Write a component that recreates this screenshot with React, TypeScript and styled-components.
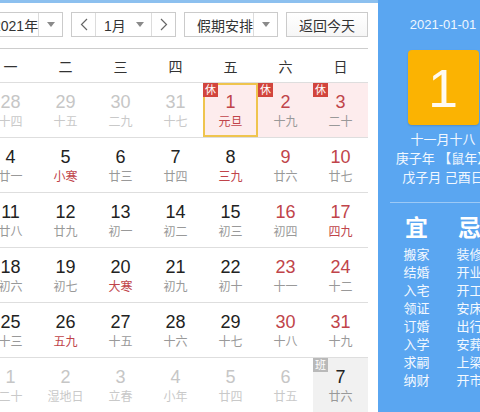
import React from 'react';
import styled, { createGlobalStyle } from 'styled-components';

const GlobalStyle = createGlobalStyle`
  html, body {
    margin: 0;
    padding: 0;
  }
  body {
    width: 480px;
    height: 412px;
    overflow: hidden;
    background: #fff;
    font-family: 'Liberation Sans', 'Noto Sans CJK SC', sans-serif;
  }
`;

const RED = '#c0444a';

const Widget = styled.div`
  display: flex;
  width: 480px;
  height: 412px;
  overflow: hidden;
`;

const CalendarPane = styled.div`
  flex: none;
  width: 385px;
  margin-left: -17px;
  padding-right: 10px;
  border-top: 3px solid #8cc0ef;
  background: #fff;
`;

const Toolbar = styled.div`
  display: flex;
  gap: 8px;
  height: 25px;
  padding: 9px 0 11px;
  border-bottom: 1px solid #cdcdcd;
`;

const SelectBox = styled.div<{ $width: number }>`
  display: flex;
  flex: none;
  width: ${(p) => p.$width}px;
  height: 25px;
  box-sizing: border-box;
  border: 1px solid #cbcbcb;
  background: #fff;
  font-size: 14px;
  color: #333;
`;

const SelectLabel = styled.span<{ $pad: number }>`
  flex: 1;
  display: flex;
  align-items: center;
  padding-left: ${(p) => p.$pad}px;
  white-space: nowrap;
`;

const Caret = styled.span<{ $divider?: boolean }>`
  flex: none;
  width: 23px;
  display: flex;
  align-items: center;
  justify-content: center;
  border-left: ${(p) => (p.$divider ? '1px solid #dcdcdc' : 'none')};
  &::after {
    content: '';
    border-left: 4px solid transparent;
    border-right: 4px solid transparent;
    border-top: 5px solid #8a8a8a;
  }
`;

const Arrow = styled.span<{ $side: 'left' | 'right' }>`
  flex: none;
  width: 23px;
  display: flex;
  align-items: center;
  justify-content: center;
  border-${(p) => (p.$side === 'left' ? 'right' : 'left')}: 1px solid #dcdcdc;
`;

const TodayButton = styled.div`
  flex: none;
  width: 82px;
  height: 25px;
  box-sizing: border-box;
  border: 1px solid #cbcbcb;
  background: linear-gradient(#fff, #f6f6f6);
  display: flex;
  align-items: center;
  justify-content: center;
  font-size: 14px;
  color: #333;
`;

const WeekHeader = styled.div`
  display: grid;
  grid-template-columns: repeat(7, 55px);
  height: 33px;
  border-bottom: 1px solid #dedede;
`;

const WeekDay = styled.div`
  display: flex;
  align-items: center;
  justify-content: center;
  font-size: 14px;
  color: #333;
`;

const Row = styled.div`
  display: grid;
  grid-template-columns: repeat(7, 55px);
  height: 54px;
  border-bottom: 1px solid #dedede;
`;

const Cell = styled.div<{ $bg: string; $today?: boolean }>`
  position: relative;
  display: flex;
  flex-direction: column;
  align-items: center;
  padding-top: 8px;
  box-sizing: border-box;
  background: ${(p) => p.$bg};
  box-shadow: ${(p) => (p.$today ? 'inset 0 0 0 2px #efc44e' : 'none')};
`;

const DayNum = styled.span<{ $color: string }>`
  font-size: 18px;
  line-height: 22px;
  color: ${(p) => p.$color};
`;

const Lunar = styled.span<{ $color: string }>`
  font-size: 12px;
  line-height: 18px;
  color: ${(p) => p.$color};
  white-space: nowrap;
`;

const Badge = styled.span<{ $bg: string }>`
  position: absolute;
  top: 0;
  left: 0;
  width: 15px;
  height: 14px;
  background: ${(p) => p.$bg};
  color: #fff;
  font-size: 11px;
  line-height: 14px;
  text-align: center;
`;

const SidePane = styled.div`
  flex: none;
  width: 130px;
  padding-top: 16px;
  background: #5aa6f1;
  color: #fff;
  display: flex;
  flex-direction: column;
  align-items: center;
`;

const DateLine = styled.div`
  font-size: 13px;
  line-height: 18px;
  color: #eef6ff;
`;

const BigDay = styled.div`
  width: 71px;
  height: 75px;
  margin-top: 16px;
  border-radius: 4px;
  background: #fbb302;
  box-shadow: 0 1px 2px rgba(0, 0, 0, 0.15);
  display: flex;
  align-items: center;
  justify-content: center;
  font-size: 54px;
  color: #fffaf0;
`;

const LunarInfo = styled.div<{ $first?: boolean }>`
  margin-top: ${(p) => (p.$first ? 5 : 0)}px;
  font-size: 13px;
  line-height: 19px;
  color: #f2f8ff;
  white-space: nowrap;
`;

const Divider = styled.div`
  align-self: stretch;
  height: 1px;
  margin: 15px 12px 0;
  background: rgba(255, 255, 255, 0.4);
`;

const YiJi = styled.div`
  align-self: stretch;
  display: grid;
  grid-template-columns: 53px 53px;
  padding-left: 12px;
  margin-top: 12px;
`;

const YiJiCol = styled.div`
  display: flex;
  flex-direction: column;
  align-items: center;
`;

const YiJiTitle = styled.div`
  font-size: 23px;
  font-weight: bold;
  line-height: 26px;
  margin-bottom: 5px;
`;

const YiJiItem = styled.div`
  font-size: 13px;
  line-height: 18px;
  color: #f4f9ff;
  white-space: nowrap;
`;

const Chevron = ({ dir }: { dir: 'left' | 'right' }) => (
  <svg width="8" height="13" viewBox="0 0 8 13">
    <polyline
      points={dir === 'left' ? '7,1 1.5,6.5 7,12' : '1,1 6.5,6.5 1,12'}
      fill="none"
      stroke="#666"
      strokeWidth="1.2"
    />
  </svg>
);

// flags: o = other month, f = red lunar text, h = holiday (休), w = work day (班), t = today
type DayCell = [number, string, string?];

const weeks: DayCell[][] = [
  [[28, '十四', 'o'], [29, '十五', 'o'], [30, '二九', 'o'], [31, '十七', 'o'], [1, '元旦', 'hft'], [2, '十九', 'h'], [3, '二十', 'h']],
  [[4, '廿一'], [5, '小寒', 'f'], [6, '廿三'], [7, '廿四'], [8, '三九', 'f'], [9, '廿六'], [10, '廿七']],
  [[11, '廿八'], [12, '廿九'], [13, '初一'], [14, '初二'], [15, '初三'], [16, '初四'], [17, '四九', 'f']],
  [[18, '初六'], [19, '初七'], [20, '大寒', 'f'], [21, '初九'], [22, '初十'], [23, '十一'], [24, '十二']],
  [[25, '十三'], [26, '五九', 'f'], [27, '十五'], [28, '十六'], [29, '十七'], [30, '十八'], [31, '十九']],
  [[1, '二十', 'o'], [2, '湿地日', 'o'], [3, '立春', 'o'], [4, '小年', 'o'], [5, '廿四', 'o'], [6, '廿五', 'o'], [7, '廿六', 'w']],
];

const weekNames = ['一', '二', '三', '四', '五', '六', '日'];
const yi = ['搬家', '结婚', '入宅', '领证', '订婚', '入学', '求嗣', '纳财'];
const ji = ['装修', '开业', '开工', '安床', '出行', '安葬', '上梁', '开市'];

const renderCell = ([day, lunar, flags = ''], col: number) => {
  const other = flags.includes('o');
  const holiday = flags.includes('h');
  const work = flags.includes('w');
  const weekend = col >= 5;
  let numColor = '#222';
  if (other) numColor = '#c6c6c6';
  else if (holiday || (weekend && !work)) numColor = RED;
  let lunarColor = '#999';
  if (other) numColor === '#c6c6c6' && (lunarColor = '#c9c9c9');
  if (!other && flags.includes('f')) lunarColor = RED;
  const bg = holiday ? '#fdeced' : work ? '#f1f1f1' : 'transparent';
  return (
    <Cell key={col} $bg={bg} $today={flags.includes('t')}>
      {holiday && <Badge $bg="#d2453d">休</Badge>}
      {work && <Badge $bg="#b9b9b9">班</Badge>}
      <DayNum $color={numColor}>{day}</DayNum>
      <Lunar $color={lunarColor}>{lunar}</Lunar>
    </Cell>
  );
};

export default function App() {
  return (
    <>
      <GlobalStyle />
      <Widget>
        <CalendarPane>
          <Toolbar>
            <SelectBox $width={80}>
              <SelectLabel $pad={9}>2021年</SelectLabel>
              <Caret $divider />
            </SelectBox>
            <SelectBox $width={105}>
              <Arrow $side="left">
                <Chevron dir="left" />
              </Arrow>
              <SelectLabel $pad={8}>1月</SelectLabel>
              <Caret />
              <Arrow $side="right">
                <Chevron dir="right" />
              </Arrow>
            </SelectBox>
            <SelectBox $width={94}>
              <SelectLabel $pad={12}>假期安排</SelectLabel>
              <Caret $divider />
            </SelectBox>
            <TodayButton>返回今天</TodayButton>
          </Toolbar>
          <WeekHeader>
            {weekNames.map((w) => (
              <WeekDay key={w}>{w}</WeekDay>
            ))}
          </WeekHeader>
          {weeks.map((week, i) => (
            <Row key={i}>{week.map((c, col) => renderCell(c, col))}</Row>
          ))}
        </CalendarPane>
        <SidePane>
          <DateLine>2021-01-01</DateLine>
          <BigDay>1</BigDay>
          <LunarInfo $first>十一月十八</LunarInfo>
          <LunarInfo>庚子年 【鼠年】</LunarInfo>
          <LunarInfo>戊子月 己酉日</LunarInfo>
          <Divider />
          <YiJi>
            <YiJiCol>
              <YiJiTitle>宜</YiJiTitle>
              {yi.map((t) => (
                <YiJiItem key={t}>{t}</YiJiItem>
              ))}
            </YiJiCol>
            <YiJiCol>
              <YiJiTitle>忌</YiJiTitle>
              {ji.map((t) => (
                <YiJiItem key={t}>{t}</YiJiItem>
              ))}
            </YiJiCol>
          </YiJi>
        </SidePane>
      </Widget>
    </>
  );
}
